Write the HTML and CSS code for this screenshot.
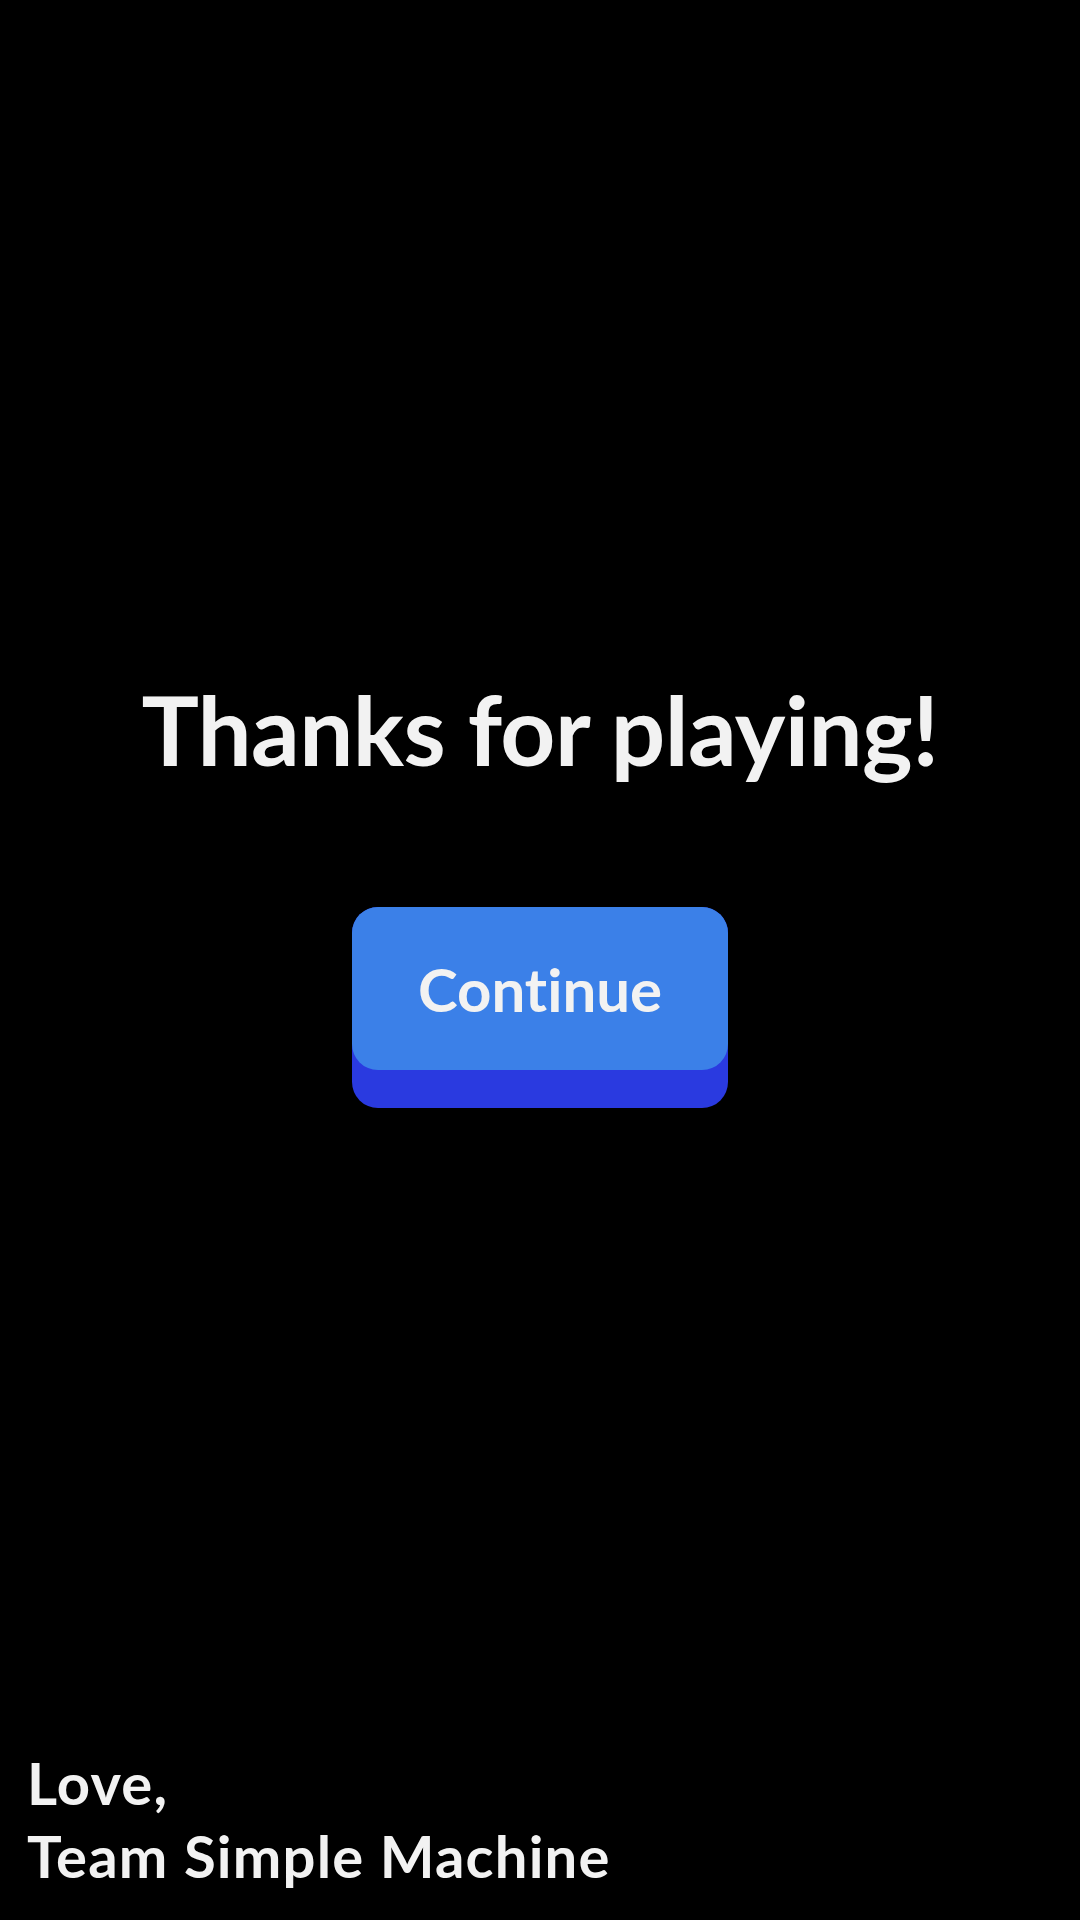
FILE: index.html
```html
<!DOCTYPE html>
<html lang="en">
<head>
<meta charset="utf-8">
<title>Thanks for playing</title>
<link rel="stylesheet" href="styles.css">
</head>
<body>
<div class="screen">
  <h1 class="title">Thanks for playing!</h1>
  <button class="continue" type="button"><span class="face">Continue</span></button>
  <p class="signature">Love,<br>Team Simple Machine</p>
</div>
</body>
</html>
```
FILE: styles.css
```css
html, body {
  margin: 0;
  padding: 0;
  background: #000;
}
.screen {
  width: 1080px;
  height: 1920px;
  display: flex;
  flex-direction: column;
  align-items: center;
  font-family: "Lato", "DejaVu Sans", sans-serif;
  font-variant-ligatures: none;
  color: #f2f2f2;
  font-weight: 700;
  box-sizing: border-box;
}
.title {
  margin: 681px 0 0 0;
  font-size: 96px;
  line-height: 1;
  font-weight: 700;
  letter-spacing: -0.6px;
  white-space: nowrap;
}
.continue {
  margin-top: 130px;
  width: 376px;
  height: 201px;
  padding: 0;
  border: none;
  border-radius: 26px;
  background: #2a3ae0;
  display: flex;
  align-items: flex-start;
  font-family: inherit;
  font-variant-ligatures: none;
  cursor: pointer;
}
.face {
  width: 100%;
  height: 163px;
  border-radius: 26px;
  background: #3b80e8;
  color: #f2f2f2;
  font-size: 60px;
  font-weight: 700;
  display: flex;
  align-items: center;
  justify-content: center;
}
.signature {
  margin: auto 0 0 0;
  align-self: stretch;
  padding: 0 0 28px 27px;
  font-size: 58px;
  line-height: 73px;
  letter-spacing: 1.2px;
}
```
